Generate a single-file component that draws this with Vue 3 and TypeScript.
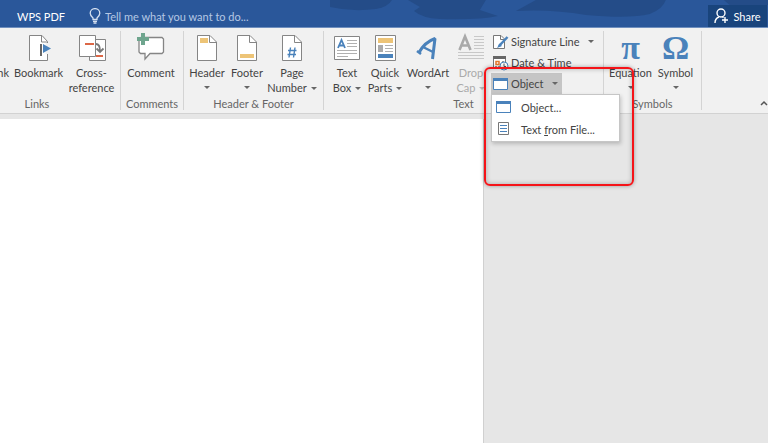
<script setup lang="ts">
import { ref } from 'vue'

const menuOpen = ref(true)
const query = ref('')
</script>

<template>
  <div class="app">
    <header class="titlebar">
      <svg class="backdrop" viewBox="0 0 438 28" preserveAspectRatio="none" aria-hidden="true">
        <path d="M0 0H62Q58 7 46 9Q22 12 0 7ZM78 0H156L150 10L168 16Q150 20 110 19Q92 18 84 11L90 7ZM206 0H336Q333 9 320 14Q300 19 256 15Q222 9 186 11ZM394 0H438V5H400Z" fill="#244c88" />
      </svg>
      <button class="tab" type="button">WPS PDF</button>
      <label class="tell">
        <svg width="12" height="16" viewBox="0 0 12 16" fill="none" stroke="#d5e0f0" stroke-width="1.3">
          <path d="M4 11.500V10Q1.200 7.500 1.200 5.200A4.600 4.400 0 0 1 10.800 5.200Q10.800 7.500 8 10V11.500ZM4 13.300H8M4.500 15H7.500" />
        </svg>
        <input v-model="query" type="text" placeholder="Tell me what you want to do..." aria-label="Tell me what you want to do" />
      </label>
      <button class="share" type="button">
        <svg width="15" height="16" viewBox="0 0 15 16" fill="none" stroke="#fff" stroke-width="1.4">
          <circle cx="7" cy="5" r="4" />
          <path d="M1 15Q1 10.500 5 9M8.500 9L9.500 9.800M11 9V15M8 12H14" />
        </svg>
        Share
      </button>
    </header>

    <div class="ribbon">
      <section class="group links">
        <div class="tools">
          <button class="tool cut" type="button"><span>nk</span></button>
          <button class="tool" type="button">
            <svg class="icon" viewBox="0 0 28 28">
              <path d="M4.500 1.500H17L22.500 7.500V26.500H4.500Z" fill="#fff" stroke="#858585" />
              <path d="M16.500 2V8H22" fill="none" stroke="#858585" />
              <path d="M22 9V20" stroke="#f1f1f1" stroke-width="3" />
              <path d="M15 10H17V22H15Z" fill="#666" />
              <path d="M18 10L26 14.500L18 19Z" fill="#4a82bb" />
            </svg>
            <span>Bookmark</span>
          </button>
          <button class="tool" type="button">
            <svg class="icon" viewBox="0 0 28 28">
              <path d="M11.500 5.500H27.500V26.500H11.500Z" fill="#fff" stroke="#858585" />
              <path d="M1.500 1.500H17.500V22.500H1.500Z" fill="#fff" stroke="#858585" />
              <path d="M7 9H16V11H7ZM18 21H25V23H18Z" fill="#dc6746" />
              <path d="M18 10Q22 10 22 17M18.500 14.500L22 18L25.500 14.500" fill="none" stroke="#777" stroke-width="1.800" />
            </svg>
            <span>Cross-<br />reference</span>
          </button>
        </div>
        <h2>Links</h2>
      </section>

      <section class="group comments">
        <div class="tools">
          <button class="tool" type="button">
            <svg class="icon" viewBox="0 0 28 28">
              <path d="M4 3.500H25L26.500 5V18L25 19.500H13L8 25V19.500H3.500L2 18V5Z" fill="#fff" stroke="#858585" stroke-width="1.300" />
              <path d="M4 -1H8V3H12V7H8V11H4V7H0V3H4Z" fill="#6fa58e" />
            </svg>
            <span>Comment</span>
          </button>
        </div>
        <h2>Comments</h2>
      </section>

      <section class="group header-footer">
        <div class="tools">
          <button class="tool" type="button">
            <svg class="icon" viewBox="0 0 28 28">
              <path d="M4.500 1.500H17L23.500 8V26.500H4.500Z" fill="#fff" stroke="#858585" />
              <path d="M16.500 2V8.500H23" fill="none" stroke="#858585" />
              <path d="M7 4H15V9H7Z" fill="#edc477" />
            </svg>
            <span>Header</span><i class="caret"></i>
          </button>
          <button class="tool" type="button">
            <svg class="icon" viewBox="0 0 28 28">
              <path d="M4.500 1.500H17L23.500 8V26.500H4.500Z" fill="#fff" stroke="#858585" />
              <path d="M16.500 2V8.500H23" fill="none" stroke="#858585" />
              <path d="M7 20H21V24H7Z" fill="#edc477" />
            </svg>
            <span>Footer</span><i class="caret"></i>
          </button>
          <button class="tool" type="button">
            <svg class="icon" viewBox="0 0 28 28">
              <path d="M4.500 1.500H17L23.500 8V26.500H4.500Z" fill="#fff" stroke="#858585" />
              <path d="M16.500 2V8.500H23" fill="none" stroke="#858585" />
              <path d="M12.500 13.500L11 23.500M17 13.500L15.500 23.500M10 16.500H18.500M9.500 20.500H18" fill="none" stroke="#4a82bb" stroke-width="1.400" />
            </svg>
            <span>Page<br />Number<i class="caret"></i></span>
          </button>
        </div>
        <h2>Header &amp; Footer</h2>
      </section>

      <section class="group text">
        <div class="tools">
          <button class="tool" type="button">
            <svg class="icon" viewBox="0 0 28 28">
              <path d="M1.500 2.500H26.500V25.500H1.500Z" fill="#fff" stroke="#858585" />
              <path d="M5 14L8.500 6L12 14M6 11.500H11" fill="none" stroke="#4a82bb" stroke-width="1.800" />
              <path d="M14 6.500H24M14 9.500H24M14 12.500H24M4 16.500H24M4 19.500H24M4 22.500H15" stroke="#b0b0b0" />
            </svg>
            <span>Text<br />Box<i class="caret"></i></span>
          </button>
          <button class="tool" type="button">
            <svg class="icon" viewBox="0 0 28 28">
              <path d="M4.500 1.500H24.500V26.500H4.500Z" fill="#fff" stroke="#858585" />
              <path d="M7 4H22V9H7Z" fill="#edc477" />
              <path d="M7 11H12V18H7Z" fill="#aaa" />
              <path d="M14 11.500H22M14 14.500H22M14 17.500H22" stroke="#b0b0b0" />
              <path d="M7 20H22V24H7Z" fill="#4a82bb" />
            </svg>
            <span>Quick<br />Parts<i class="caret"></i></span>
          </button>
          <button class="tool wide" type="button">
            <svg class="icon" viewBox="0 0 28 28" fill="none" stroke="#4a82bb">
              <path d="M3 17L7 20" stroke-width="2.500" />
              <path d="M5 18.500Q11 8 21 4.500L18.500 25" stroke-width="3" stroke-linejoin="bevel" />
              <path d="M10 13.500L19 18" stroke-width="2.500" />
            </svg>
            <span>WordArt</span><i class="caret"></i>
          </button>
          <button class="tool faded" type="button" disabled>
            <svg class="icon" viewBox="0 0 28 28">
              <path d="M2.500 16L8 2.500L13.500 16M4 11.500H12" fill="none" stroke="#a9a9a9" stroke-width="2.600" />
              <path d="M17 2.500H27M17 5.500H27M17 8.500H27M17 11.500H27M17 14.500H27M1 18.500H27M1 21.500H27M1 24.500H27" stroke="#c8c8c8" />
            </svg>
            <span>Drop<br />Cap<i class="caret"></i></span>
          </button>
          <div class="stack">
            <button class="row signature" type="button">
              <svg width="17" height="16" viewBox="0 0 17 16">
                <path d="M1.500 1.500H9L12.500 5V14.500H1.500Z" fill="#fff" stroke="#777" />
                <path d="M8.500 2V5.500H12" fill="none" stroke="#777" />
                <path d="M15.500 3L7 12" stroke="#4a82bb" stroke-width="2.500" />
                <path d="M7.500 9.500L5 14L10 12Z" fill="#4a82bb" />
              </svg>
              Signature Line<i class="caret"></i>
            </button>
            <button class="row" type="button">
              <svg width="17" height="16" viewBox="0 0 17 16">
                <path d="M1.500 2.500H13.500V13.500H1.500Z" fill="#fff" stroke="#777" />
                <path d="M1 1H14V4H1Z" fill="#666" />
                <path d="M10 6.500H12M9.500 8.500H12M3 11.500H8" stroke="#999" stroke-dasharray="2 1" />
                <path d="M4 6.500H7V9.500H4Z" fill="#fff" stroke="#e4772b" stroke-width="1.500" />
                <circle cx="12" cy="11" r="4" fill="#fff" stroke="#4a82bb" />
                <path d="M12 8.500V11.500H14" fill="none" stroke="#555" />
              </svg>
              Date &amp; Time
            </button>
            <div class="dropdown">
              <button class="row active" type="button" :aria-expanded="menuOpen" @click="menuOpen = !menuOpen">
                <svg width="17" height="16" viewBox="0 0 17 16">
                  <path d="M1.500 2.500H15.500V13.500H1.500Z" fill="#fff" stroke="#4a82bb" />
                  <path d="M1 2H16V5H1Z" fill="#4a82bb" />
                </svg>
                Object<i class="caret"></i>
              </button>
              <div v-if="menuOpen" class="menu" role="menu">
                <button type="button" role="menuitem">
                  <svg width="17" height="16" viewBox="0 0 17 16">
                    <path d="M1.500 2.500H15.500V13.500H1.500Z" fill="#fff" stroke="#4a82bb" />
                    <path d="M1 2H16V5H1Z" fill="#4a82bb" />
                  </svg>
                  <span>Object...</span>
                </button>
                <button type="button" role="menuitem">
                  <svg width="17" height="16" viewBox="0 0 17 16">
                    <path d="M3.500 1.500H13.500V13.500H3.500Z" fill="#fff" stroke="#777" />
                    <path d="M5 4.500H12M5 7.500H12M5 10.500H12" stroke="#4a82bb" />
                  </svg>
                  <span>Text <u>f</u>rom File...</span>
                </button>
              </div>
            </div>
          </div>
        </div>
        <h2>Text</h2>
      </section>

      <section class="group symbols">
        <div class="tools">
          <button class="tool" type="button">
            <b class="icon glyph">π</b>
            <span>Equation</span><i class="caret"></i>
          </button>
          <button class="tool" type="button">
            <b class="icon glyph">Ω</b>
            <span>Symbol</span><i class="caret"></i>
          </button>
        </div>
        <h2>Symbols</h2>
      </section>

      <button class="collapse" type="button" aria-label="Collapse the ribbon">
        <svg width="8" height="6" viewBox="0 0 8 6"><path d="M1 5L4 2L7 5" fill="none" stroke="#555" stroke-width="1.500" /></svg>
      </button>
    </div>

    <main class="workspace">
      <div class="page"></div>
    </main>
    <div class="highlight"></div>
  </div>
</template>

<style>
body {
  margin: 0;
  background: #e6e6e6;
}
</style>

<style scoped>
.app {
  position: relative;
  display: flex;
  flex-direction: column;
  min-height: 100vh;
  overflow: hidden;
  font-family: Lato, "Noto Sans", sans-serif;
  font-size: 11px;
  line-height: 15px;
  color: #444;
}
button {
  padding: 0;
  border: 0;
  background: none;
  color: inherit;
  font: inherit;
  white-space: nowrap;
}
.titlebar {
  position: relative;
  display: flex;
  align-items: flex-end;
  height: 27px;
  background: #2a579a;
  border-bottom: 1px solid #6f8fbe;
  color: #fff;
}
.backdrop {
  position: absolute;
  top: 0;
  right: 0;
  width: 57%;
  height: 28px;
}
.tab {
  height: 22px;
  margin-left: 17px;
}
.tell {
  display: flex;
  flex: 1;
  align-items: center;
  gap: 4px;
  height: 22px;
  margin-left: 24px;
}
.tell input {
  width: 200px;
  padding: 0;
  border: 0;
  outline: 0;
  background: none;
  color: #fff;
  font: inherit;
}
.tell input::placeholder {
  color: #b5c8e4;
  opacity: 1;
}
.share {
  position: relative;
  display: flex;
  align-items: center;
  justify-content: center;
  gap: 4px;
  width: 59px;
  height: 22px;
  margin-right: 1px;
  background: #19447c;
}
.ribbon {
  display: flex;
  height: 85px;
  background: #f1f1f1;
  border-bottom: 1px solid #d2d2d2;
}
.group {
  position: relative;
  display: flex;
  flex-direction: column;
  box-sizing: border-box;
  margin: 3px 0;
  border-right: 1px solid #d4d4d4;
}
.group h2 {
  margin: 0;
  font-size: 11px;
  font-weight: 400;
  line-height: 12px;
  text-align: center;
  color: #666;
}
.tools {
  display: flex;
  height: 69px;
}
.tool {
  display: flex;
  flex: none;
  flex-direction: column;
  align-items: center;
  padding-top: 3px;
}
.icon {
  flex: none;
  width: 28px;
  height: 28px;
  margin-bottom: 3px;
  overflow: visible;
}
.glyph {
  font: 700 34px/28px "Liberation Serif", serif;
  text-align: center;
  color: #4a82bb;
}
.caret {
  display: inline-block;
  border: 3px solid transparent;
  border-top-color: #666;
  border-bottom: 0;
}
.tool > .caret {
  margin-top: 6px;
}
span .caret {
  margin-left: 4px;
  vertical-align: 2px;
}
.faded {
  color: #aaa;
}
.faded .caret {
  border-top-color: #bbb;
}
.links {
  width: 121px;
}
.links .tool {
  width: 53px;
}
.links .cut {
  width: 9px;
  padding-top: 34px;
  align-items: flex-end;
  margin-right: 3px;
}
.links h2 {
  padding-right: 46px;
}
.comments {
  width: 63px;
}
.comments .tools {
  justify-content: center;
  padding-right: 2px;
}
.header-footer {
  width: 140px;
}
.header-footer .tools {
  padding-left: 3px;
}
.header-footer .tool {
  width: 40px;
}
.header-footer .tool:last-child {
  width: 50px;
}
.text {
  width: 280px;
}
.text .tools {
  padding-left: 4px;
}
.text .tool {
  width: 38px;
}
.text .wide {
  width: 48px;
}
.symbols {
  width: 98px;
}
.symbols .tools {
  padding-left: 4px;
}
.symbols .tool {
  width: 45px;
}
.stack {
  display: flex;
  flex-direction: column;
  align-items: flex-start;
  margin-left: 1px;
}
.row {
  display: flex;
  align-items: center;
  gap: 2px;
  height: 21px;
  padding: 0 4px 0 1px;
}
.row .caret {
  margin-left: 6px;
}
.active {
  background: #c5c5c5;
}
.dropdown {
  position: relative;
}
.menu {
  position: absolute;
  top: 21px;
  left: 0;
  z-index: 2;
  box-sizing: border-box;
  width: 129px;
  padding: 1px;
  border: 1px solid #c6c6c6;
  background: #fff;
  box-shadow: 1px 2px 4px #0003;
}
.menu button {
  display: flex;
  align-items: center;
  gap: 9px;
  width: 100%;
  height: 22px;
  padding-left: 2px;
}
.collapse {
  align-self: flex-end;
  margin-left: auto;
  margin-bottom: 4px;
}
.workspace {
  display: flex;
  flex: 1;
  padding-top: 5px;
  background: #e6e6e6;
}
.page {
  box-sizing: border-box;
  width: 63%;
  border-right: 1px solid #d0d0d0;
  background: #fff;
}
.highlight {
  position: absolute;
  top: 67px;
  left: 484px;
  z-index: 3;
  box-sizing: border-box;
  width: 150px;
  height: 119px;
  border: 2px solid #f51419;
  border-radius: 6px;
  box-shadow: 0 0 4px #0005, inset 0 0 5px #0004;
  pointer-events: none;
}
</style>
